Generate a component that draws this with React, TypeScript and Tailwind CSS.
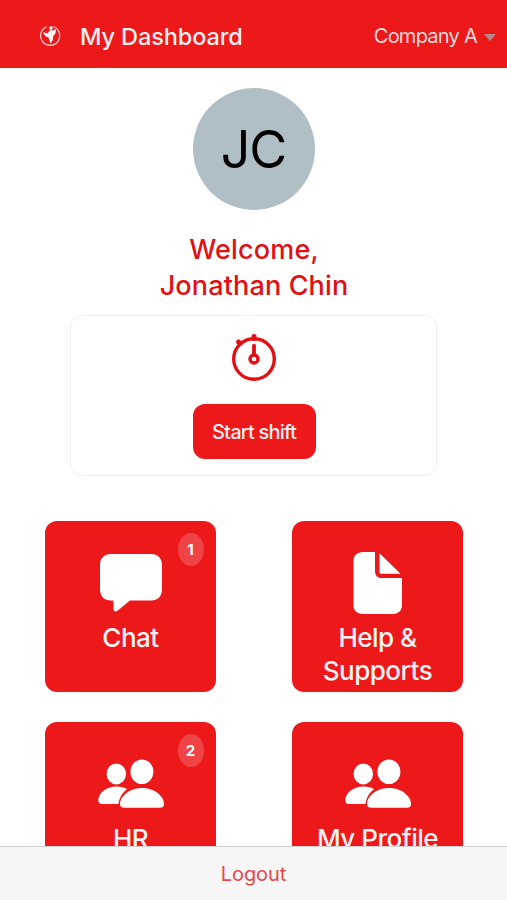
import React from "react";

type Tile = {
  label: string;
  icon: React.ReactNode;
  badge?: number;
};

function LogoIcon() {
  return (
    <svg width="22" height="22" viewBox="0 0 22 22" fill="none">
      <path d="M7.500 1.800A9.600 9.600 0 1 0 14 1.500" stroke="#fff" strokeOpacity="0.75" strokeWidth="1.300" />
      <circle cx="12" cy="3" r="1.800" fill="#fff" />
      <path
        d="M9.800 6.800 11.200 4.800 13.400 5.400 17 4.200C17 7.400 16 9.800 14.200 11.200L13.800 15 11.600 18.400 10.200 15 9.400 12.600C6.400 11.800 4.800 9.800 4.200 7L8.400 8.400Z"
        fill="#fff"
        fillOpacity="0.95"
      />
    </svg>
  );
}

function StopwatchIcon() {
  return (
    <svg width="48" height="50" viewBox="0 0 48 50" fill="none" stroke="#e30f13">
      <circle cx="24" cy="27" r="20.300" strokeWidth="3.400" />
      <path d="M24 13.600v9.400" strokeWidth="3.800" strokeLinecap="round" />
      <circle cx="24" cy="27" r="4" strokeWidth="3.400" />
      <path d="M24 4.500v2M8.600 10l1.400 1.400" strokeWidth="5" strokeLinecap="round" />
    </svg>
  );
}

function ChatIcon() {
  return (
    <svg width="64" height="64" viewBox="0 0 64 64" fill="#fff">
      <path d="M12 3H52C59 3 63 7.500 63 14V38C63 45 59 49.500 52 49.500H31L18.500 59.800C16.500 61.200 14.500 60.500 14.500 58V49.500H12C5 49.500 1 45 1 38V14C1 7.500 5 3 12 3Z" />
    </svg>
  );
}

function DocumentIcon() {
  return (
    <svg width="64" height="64" viewBox="0 0 64 64" fill="#fff">
      <path d="M17 1H29V20C29 24.500 31.500 27 35.500 27H56V54C56 59.500 52.500 63 47 63H17C11 63 7.500 59.500 7.500 54V10C7.500 4.500 11 1 17 1Z" />
      <path d="M33.500 2.200 54.500 22.800H35.500C34 22.800 33.500 22.200 33.500 21Z" />
    </svg>
  );
}

function PeopleIcon() {
  return (
    <svg width="68" height="64" viewBox="0 0 68 64" fill="#fff">
      <ellipse cx="19.300" cy="21.900" rx="9.700" ry="10.500" />
      <path d="M19.500 34.500C24 34.500 27.500 35.500 30 37.300C25.500 40.500 22.500 45.500 21.500 51.900H5C2.500 51.900 1.300 50.500 1.300 48C1.300 41.500 9 34.500 19.500 34.500Z" />
      <ellipse cx="44.900" cy="19.700" rx="11.500" ry="12.300" />
      <path d="M45 36C58 36 67 44.500 67 52C67 54.700 65.500 55.800 62.500 55.800H27.500C24.500 55.800 23 54.700 23 52C23 44.500 32 36 45 36Z" />
    </svg>
  );
}

const tiles: Tile[] = [
  { label: "Chat", icon: <ChatIcon />, badge: 1 },
  { label: "Help & Supports", icon: <DocumentIcon /> },
  { label: "HR", icon: <PeopleIcon />, badge: 2 },
  { label: "My Profile", icon: <PeopleIcon /> },
];

export default function App() {
  return (
    <div className="flex h-[900px] w-full flex-col overflow-hidden bg-white font-['Inter',sans-serif]">
      {/* Header */}
      <header className="flex h-[68px] shrink-0 items-center bg-[#ed181a] pt-1 pr-[11px] pl-[39px] text-white">
        <LogoIcon />
        <h1 className="mt-0.5 ml-[19px] text-[23.500px] font-medium tracking-[-0.1px] whitespace-nowrap text-[#ffeeee]">
          My Dashboard
        </h1>
        <button className="ml-auto flex items-center gap-[7px] text-[20px] tracking-[-0.75px] whitespace-nowrap text-[#ffdcdc]">
          Company A
          <svg className="mt-0.5" width="12" height="7" viewBox="0 0 12 7" fill="#b5898a">
            <path d="M0 0h12L6 7z" />
          </svg>
        </button>
      </header>

      <main className="flex min-h-0 flex-1 flex-col items-center overflow-hidden pt-5">
        {/* Avatar */}
        <div className="flex size-[122px] shrink-0 items-center justify-center rounded-full bg-[#b0bec5] pt-px text-[52px] tracking-[-1.2px] text-black">
          JC
        </div>

        <h2 className="mt-[22px] pl-px text-center text-[27px] leading-[35.500px] font-medium tracking-[0.15px] text-[#e30f13]">
          Welcome,
          <br />
          Jonathan Chin
        </h2>

        {/* Shift */}
        <section className="mt-[12px] flex h-[161px] w-[367px] shrink-0 flex-col items-center rounded-xl border border-[#efefef] pt-4 pl-px">
          <StopwatchIcon />
          <button className="mt-[22px] h-[55px] w-[123px] rounded-xl bg-[#ed181a] text-[20px] font-medium tracking-[-0.8px] whitespace-nowrap text-[#ffeeee]">
            Start shift
          </button>
        </section>

        {/* Menu */}
        <div className="mt-[45px] grid shrink-0 grid-cols-2 gap-x-[76px] gap-y-[30px]">
          {tiles.map((tile) => (
            <div
              key={tile.label}
              className="relative flex size-[171px] flex-col items-center rounded-xl bg-[#ed181a] pt-[30px] pl-px"
            >
              {tile.icon}
              <span className="mt-[6px] w-[130px] text-center text-[26px] leading-[33px] font-medium tracking-[-0.5px] text-[#fff2f2]">
                {tile.label}
              </span>
              {tile.badge && (
                <span className="absolute top-3 right-3 flex h-[33px] w-[26px] items-center justify-center rounded-[50%] bg-[#f04345] pt-px text-[15px] font-bold text-white">
                  {tile.badge}
                </span>
              )}
            </div>
          ))}
        </div>
      </main>

      <footer className="flex h-[54px] shrink-0 items-center justify-center border-t border-[#cfcfcf] bg-[#f6f6f6]">
        <button className="text-[20px] tracking-[-0.1px] text-[#e8474a]">Logout</button>
      </footer>
    </div>
  );
}
